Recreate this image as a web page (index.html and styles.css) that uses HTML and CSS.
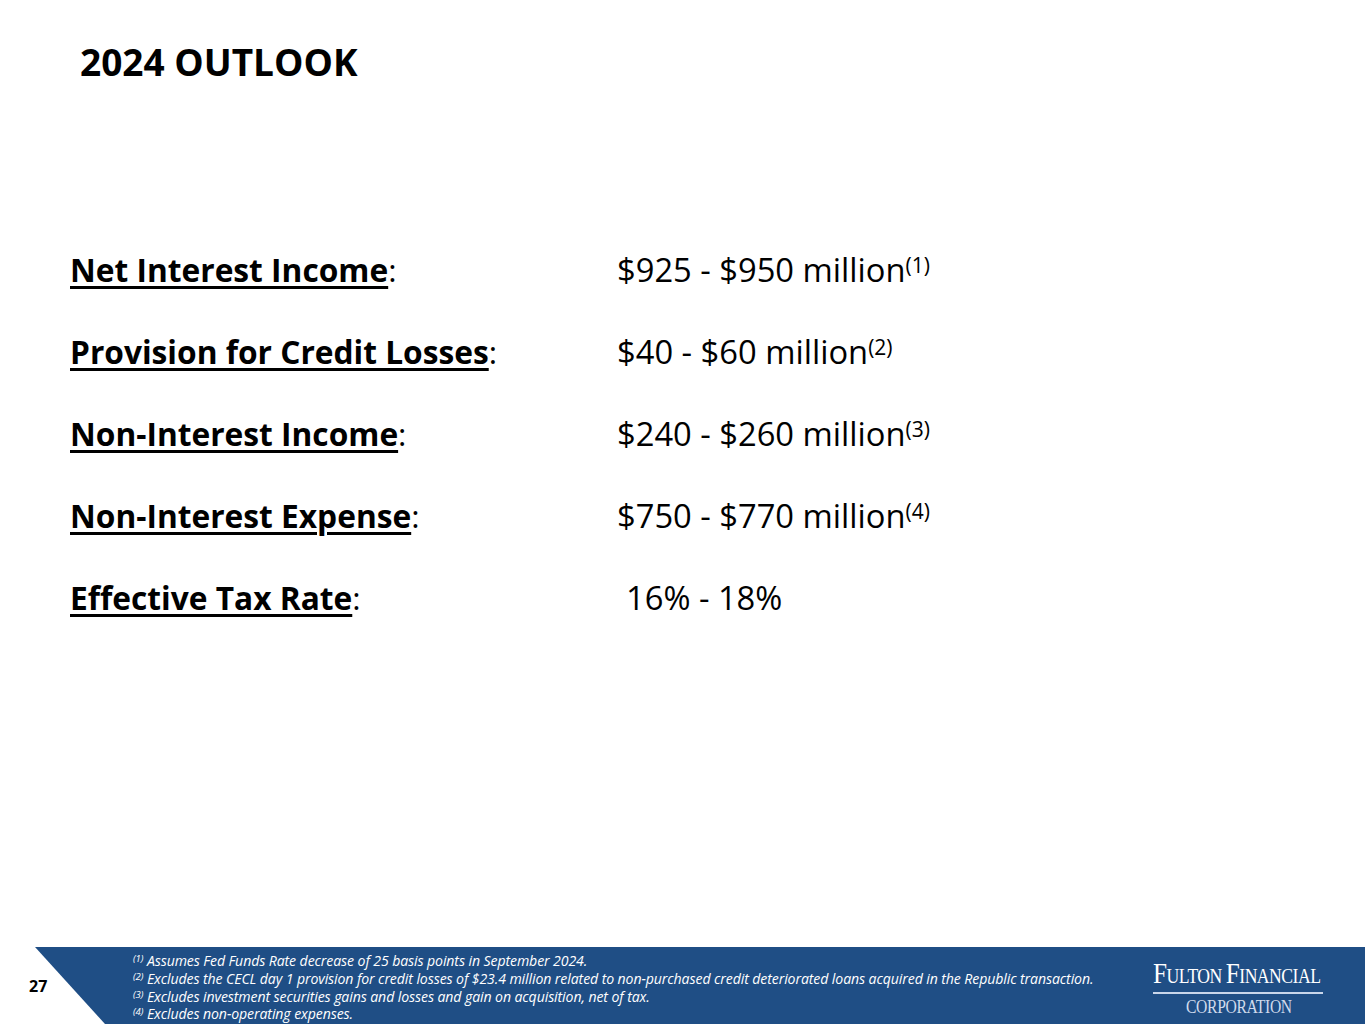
FILE: index.html
```html
<!DOCTYPE html>
<html lang="en">
<head>
<meta charset="utf-8">
<title>2024 Outlook</title>
<link rel="stylesheet" href="styles.css">
</head>
<body>
<div class="slide">
  <header class="head">
    <h1 class="title">2024 OUTLOOK</h1>
  </header>
  <main class="outlook">
    <div class="row">
      <div class="label"><span class="u">Net Interest Income</span><span class="colon">:</span></div>
      <div class="value">$925 - $950 million<sup>(1)</sup></div>
    </div>
    <div class="row">
      <div class="label"><span class="u">Provision for Credit Losses</span><span class="colon">:</span></div>
      <div class="value">$40 - $60 million<sup>(2)</sup></div>
    </div>
    <div class="row">
      <div class="label"><span class="u">Non-Interest Income</span><span class="colon">:</span></div>
      <div class="value">$240 - $260 million<sup>(3)</sup></div>
    </div>
    <div class="row">
      <div class="label"><span class="u">Non-Interest Expense</span><span class="colon">:</span></div>
      <div class="value">$750 - $770 million<sup>(4)</sup></div>
    </div>
    <div class="row">
      <div class="label"><span class="u">Effective Tax Rate</span><span class="colon">:</span></div>
      <div class="value indent">16% - 18%</div>
    </div>
  </main>
  <footer class="foot">
    <div class="pagenum">27</div>
    <div class="band">
      <ul class="notes">
        <li><sup>(1)</sup> Assumes Fed Funds Rate decrease of 25 basis points in September 2024.</li>
        <li><sup>(2)</sup> Excludes the CECL day 1 provision for credit losses of $23.4 million related to non-purchased credit deteriorated loans acquired in the Republic transaction.</li>
        <li><sup>(3)</sup> Excludes investment securities gains and losses and gain on acquisition, net of tax.</li>
        <li><sup>(4)</sup> Excludes non-operating expenses.</li>
      </ul>
      <div class="logo">
        <div class="logo-top"><span class="big">F</span>ULTON <span class="big">F</span>INANCIAL</div>
        <div class="logo-rule"></div>
        <div class="logo-bottom">CORPORATION</div>
      </div>
    </div>
  </footer>
</div>
</body>
</html>
```

FILE: styles.css
```css
* { box-sizing: border-box; }
html, body { margin: 0; padding: 0; background: #ffffff; }
body { font-family: "Open Sans", "Noto Sans", "DejaVu Sans", sans-serif; color: #000; }

.slide {
  width: 1365px;
  height: 1024px;
  display: flex;
  flex-direction: column;
  overflow: hidden;
}

.head { padding: 36px 0 0 80px; height: 248px; }
.title {
  margin: 0;
  font-size: 37px;
  font-weight: 700;
  line-height: 52px;
  letter-spacing: 0;
}

.outlook {
  flex: 1;
  padding-left: 70px;
  display: flex;
  flex-direction: column;
}
.row {
  display: grid;
  grid-template-columns: 547px 1fr;
  height: 82px;
  line-height: 44px;
}
.label { font-weight: 700; font-size: 31.7px; }
.colon { font-weight: 400; }
.u { text-decoration: underline; text-decoration-thickness: 3px; text-underline-offset: 4px; }
.value { font-weight: 400; font-size: 32.7px; }
.value.indent { padding-left: 9px; }
.value sup { font-size: 21px; line-height: 0; vertical-align: 9px; }

.foot {
  height: 77px;
  display: flex;
  align-items: stretch;
}
.pagenum {
  width: 35px;
  font-size: 16px;
  font-weight: 700;
  padding: 28px 0 0 29px;
  flex: none;
  white-space: nowrap;
}
.band {
  flex: 1;
  background: #1f4e85;
  clip-path: polygon(0 0, 100% 0, 100% 100%, 70px 100%);
  display: flex;
  justify-content: space-between;
  padding: 5px 0 0 98px;
  color: #fff;
}
.notes {
  list-style: none;
  margin: 0;
  padding: 0;
  font-size: 14.1px;
  font-style: italic;
  line-height: 17.8px;
  letter-spacing: -0.1px;
}
.notes sup { font-size: 9.5px; line-height: 0; vertical-align: 4px; }

.logo {
  width: 212px;
  padding: 7px 0 0 0;
  font-family: "Liberation Serif", "DejaVu Serif", serif;
  display: flex;
  flex-direction: column;
  align-items: flex-start;
}
.logo-top {
  font-size: 21px;
  line-height: 27px;
  color: #ffffff;
  letter-spacing: -0.6px;
  white-space: nowrap;
  transform: scaleX(0.84);
  transform-origin: left center;
}
.logo-top .big { font-size: 30px; }
.logo-rule { width: 170px; height: 2px; background: #c9d6ea; margin-top: 2px; }
.logo-bottom {
  font-size: 18px;
  line-height: 20px;
  color: #d0dbec;
  margin: 3px 0 0 33px;
  letter-spacing: -0.4px;
  transform: scaleX(0.87);
  transform-origin: left center;
}
```
